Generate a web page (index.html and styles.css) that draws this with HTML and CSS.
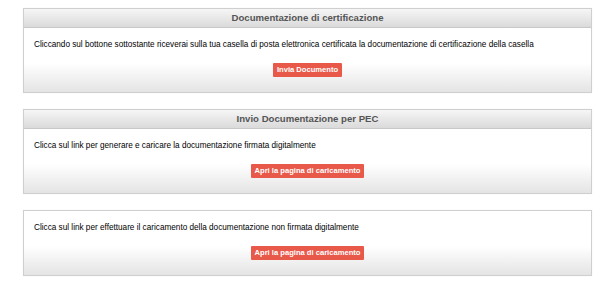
FILE: index.html
```html
<!DOCTYPE html>
<html lang="it">
<head>
  <meta charset="UTF-8" />
  <title>Documentazione PEC</title>
  <link rel="stylesheet" href="styles.css">
</head>
<body>
  <div class="panel">
    <div class="panel-title">Documentazione di certificazione</div>
    <div class="panel-body">
      <p>Cliccando sul bottone sottostante riceverai sulla tua casella di posta elettronica certificata la documentazione di certificazione della casella</p>
      <div class="actions"><a class="button" href="#">Invia Documento</a></div>
    </div>
  </div>

  <div class="panel">
    <div class="panel-title">Invio Documentazione per PEC</div>
    <div class="panel-body">
      <p>Clicca sul link per generare e caricare la documentazione firmata digitalmente</p>
      <div class="actions"><a class="button" href="#">Apri la pagina di caricamento</a></div>
    </div>
  </div>

  <div class="panel">
    <div class="panel-body">
      <p>Clicca sul link per effettuare il caricamento della documentazione non firmata digitalmente</p>
      <div class="actions"><a class="button" href="#">Apri la pagina di caricamento</a></div>
    </div>
  </div>
</body>
</html>
```

FILE: styles.css
```css
body {
  font-family: 'Liberation Sans', Arial, sans-serif;
  background: #fff;
  color: #000;
  margin: 0;
  padding: 8px 18px 0 23px;
}
.panel {
  border: 1px solid #cfcfcf;
  margin-bottom: 16px;
  box-shadow: 0 0 1px rgba(0, 0, 0, 0.08);
}
.panel-title {
  background: linear-gradient(#f6f6f6, #dadada);
  border-bottom: 1px solid #c8c8c8;
  color: #555;
  font-weight: bold;
  font-size: 9.6px;
  text-align: center;
  height: 18px;
  line-height: 18px;
}
.panel-body {
  background: linear-gradient(#fff 55%, #e4e4e4);
  padding: 11px 10px 15px;
  font-size: 8.2px;
}
.panel-body p {
  margin: 0;
  line-height: 12px;
}
.actions {
  text-align: center;
  margin-top: 12px;
  height: 14px;
}
.button {
  display: inline-block;
  vertical-align: top;
  background: #e8594a;
  color: #fff;
  font-weight: bold;
  font-size: 7.6px;
  text-decoration: none;
  padding: 0 4px;
  height: 14px;
  line-height: 14px;
  border-radius: 1px;
}
```
